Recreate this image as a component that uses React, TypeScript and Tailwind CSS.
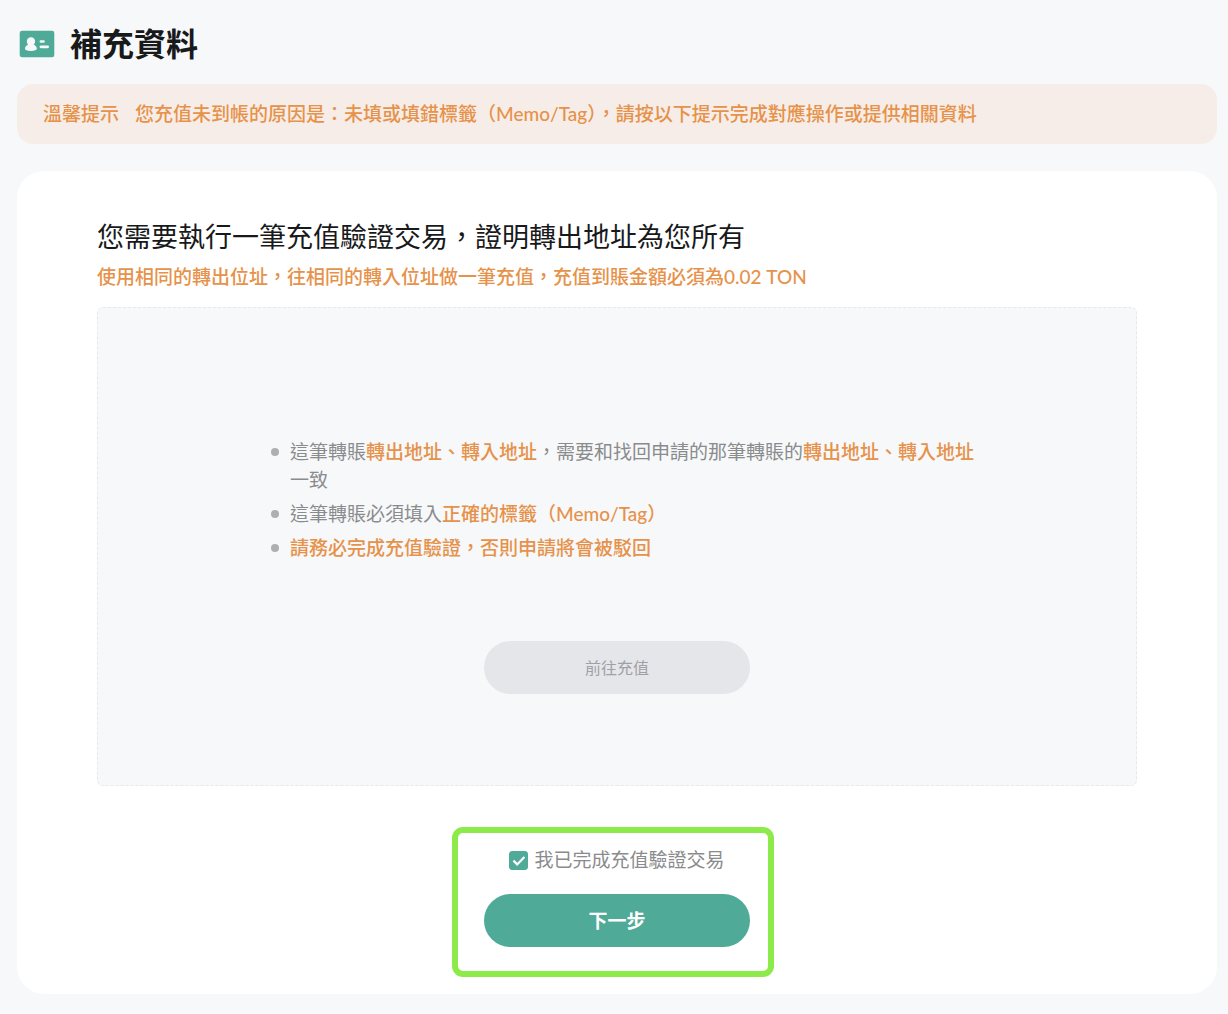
import { useState } from 'react';

function ProfileCardIcon() {
  return (
    <svg className="w-9 h-7 flex-shrink-0" viewBox="0 0 36 28" fill="none" aria-hidden="true">
      <rect x="0.7" y="0.7" width="34.6" height="26.6" rx="2.4" fill="#50aa98" />
      <path
        d="M12 7.2c2.5 0 4.1 1.7 4.1 4 0 1.5-.6 2.8-1.6 3.6 1.9.6 3.3 2 3.3 4 0 1.5-2.2 2.1-5.9 2.1s-5.9-.6-5.9-2.1c0-2 1.4-3.4 3.3-4-1-.8-1.5-2.1-1.5-3.6 0-2.3 1.7-4 4.2-4z"
        fill="#f7f8fa"
      />
      <path d="M21.9 11.5h2.6M21.9 16.8h6.8" stroke="#f7f8fa" strokeWidth="2.7" strokeLinecap="round" />
    </svg>
  );
}

function Highlight({ children }: { children: React.ReactNode }) {
  return <span className="font-medium text-[#e6924a]">{children}</span>;
}

function RuleItem({ children }: { children: React.ReactNode }) {
  return (
    <li className="flex items-start gap-[11px]">
      <span className="flex items-center h-7 flex-shrink-0">
        <span className="w-2 h-2 rounded-full bg-[#aeafb2]" />
      </span>
      <span>{children}</span>
    </li>
  );
}

export default function App() {
  const [confirmed, setConfirmed] = useState(true);

  return (
    <div
      lang="zh-Hant"
      className="min-h-screen bg-[#f7f8fa] pl-[17px] pr-[11px] pt-5 pb-5 font-['Lato','Noto_Sans_CJK_TC',sans-serif] text-[#8a8b8d]"
    >
      <header className="flex items-center gap-[15px] h-12 pl-0.5">
        <ProfileCardIcon />
        <h1 className="text-[32px] leading-[48px] font-bold text-[#18191b]">補充資料</h1>
      </header>

      <div className="mt-4 flex gap-4 rounded-2xl bg-[#f6ede8] px-[26px] py-4 text-[19px] leading-7 font-medium text-[#e6924a]">
        <span className="flex-shrink-0">溫馨提示</span>
        <p>您充值未到帳的原因是：未填或填錯標籤（Memo/Tag），請按以下提示完成對應操作或提供相關資料</p>
      </div>

      <main className="mt-[27px] rounded-[27px] bg-white px-20 pt-12 pb-[47px]">
        <h2 className="text-[27px] leading-9 text-[#18191b]">您需要執行一筆充值驗證交易，證明轉出地址為您所有</h2>
        <p className="mt-2 text-[19px] leading-7 font-medium text-[#e6924a]">
          使用相同的轉出位址，往相同的轉入位址做一筆充值，充值到賬金額必須為0.02 TON
        </p>

        <section className="mt-4 flex flex-col items-center rounded-md border border-dashed border-[#e6e8eb] bg-[#f7f8fa] pt-[130px] pb-[91px]">
          <ul className="flex flex-col gap-[6px] max-w-[716px] pl-3 text-[19px] leading-7">
            <RuleItem>
              這筆轉賬<Highlight>轉出地址、轉入地址</Highlight>，需要和找回申請的那筆轉賬的
              <Highlight>轉出地址、轉入地址</Highlight>一致
            </RuleItem>
            <RuleItem>
              這筆轉賬必須填入<Highlight>正確的標籤（Memo/Tag）</Highlight>
            </RuleItem>
            <RuleItem>
              <Highlight>請務必完成充值驗證，否則申請將會被駁回</Highlight>
            </RuleItem>
          </ul>
          <button
            type="button"
            disabled
            className="mt-[79px] w-[266px] h-[53px] rounded-full bg-[#e5e6ea] text-base text-[#a0a1a4]"
          >
            前往充值
          </button>
        </section>

        <div className="relative mx-auto mt-[60px] flex w-[266px] flex-col items-center">
          <label className="flex items-center gap-[6px] text-[19px] leading-7 cursor-pointer">
            <span className="relative flex w-[19px] h-[19px]">
              <input
                type="checkbox"
                checked={confirmed}
                onChange={(e) => setConfirmed(e.target.checked)}
                className="w-full h-full appearance-none rounded-[3px] border border-[#50aa98] checked:bg-[#50aa98]"
              />
              {confirmed && (
                <svg className="absolute inset-0 pointer-events-none" viewBox="0 0 19 19" fill="none" aria-hidden="true">
                  <path d="M4.4 9.6l3.8 3.8 7.2-7.4" stroke="white" strokeWidth="2.2" />
                </svg>
              )}
            </span>
            我已完成充值驗證交易
          </label>
          <button
            type="button"
            disabled={!confirmed}
            className="mt-5 w-full h-[53px] rounded-full bg-[#50aa98] text-[19px] leading-7 font-bold text-white hover:bg-[#479b8a] transition-colors"
          >
            下一步
          </button>
          {/* Callout frame around the final step */}
          <div className="absolute -top-[19px] -bottom-[30px] -left-8 -right-6 rounded-[11px] border-[6px] border-[#8ceb4b] pointer-events-none" />
        </div>
      </main>
    </div>
  );
}
